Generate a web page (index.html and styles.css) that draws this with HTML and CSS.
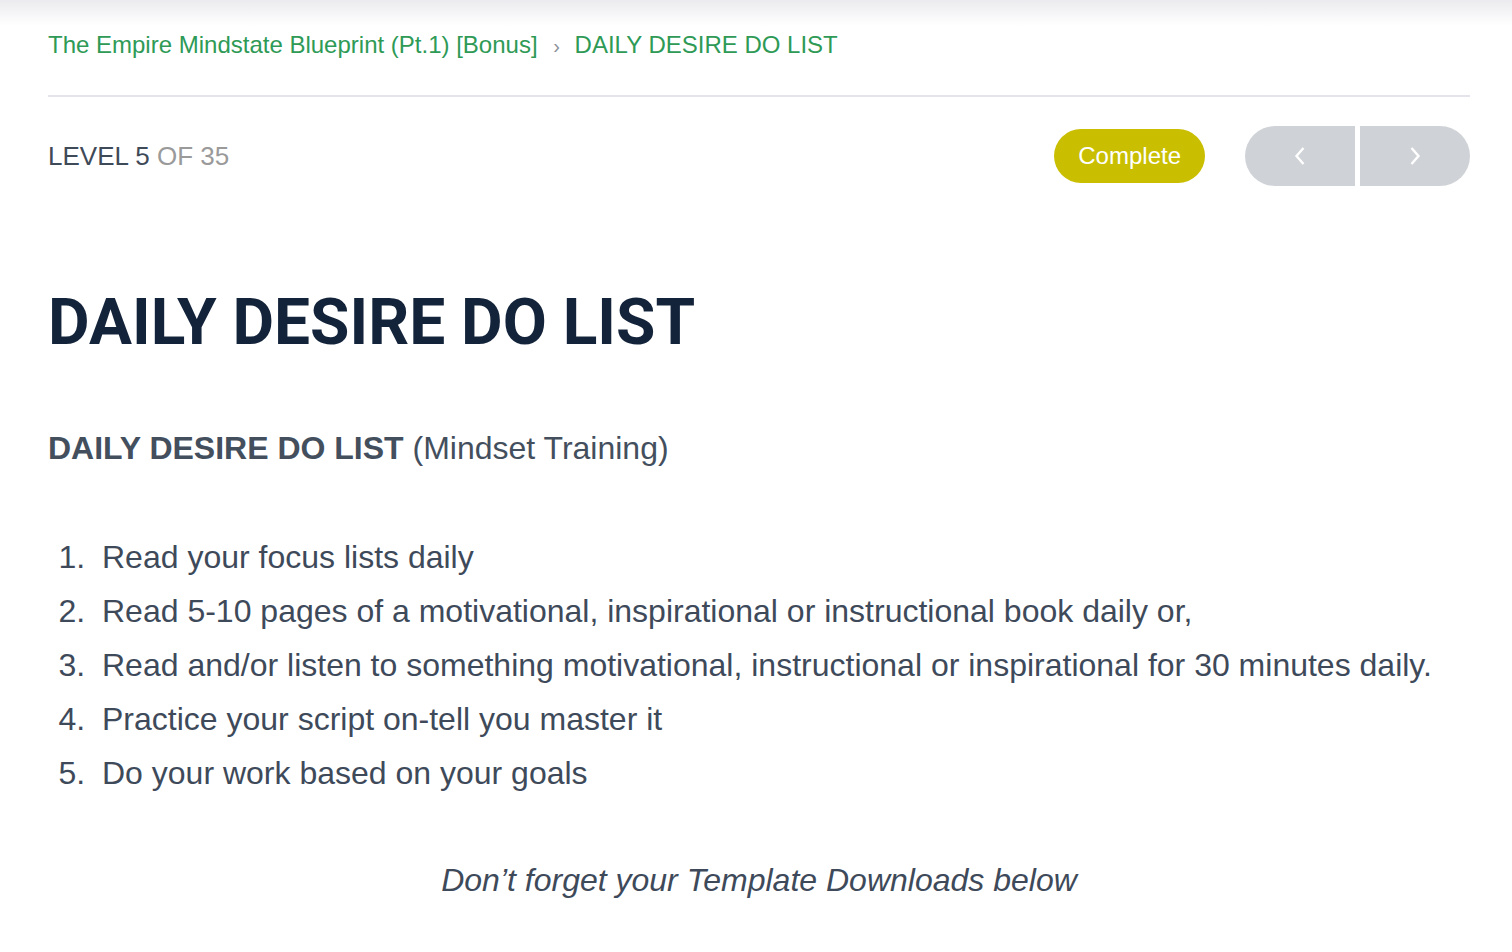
FILE: index.html
```html
<!DOCTYPE html>
<html lang="en">
<head>
    <meta charset="UTF-8">
    <meta name="viewport" content="width=device-width, initial-scale=1.0">
    <title>DAILY DESIRE DO LIST</title>
    <link rel="stylesheet" href="styles.css">
</head>
<body>
    <div class="topshade"></div>
    <div class="page">
        <div class="crumbs">
            <a href="#">The Empire Mindstate Blueprint (Pt.1) [Bonus]</a>
            <span class="sep">&rsaquo;</span>
            <a href="#">DAILY DESIRE DO LIST</a>
        </div>

        <div class="levelbar">
            <div class="level">LEVEL <span class="num">5</span> <span class="of">OF 35</span></div>
            <div class="actions">
                <button class="complete">Complete</button>
                <div class="nav">
                    <button class="prev">
                        <svg width="12" height="20" viewBox="0 0 12 20"><path d="M9.5 2 L2.5 10 L9.5 18" fill="none" stroke="#fff" stroke-width="2.4"/></svg>
                    </button>
                    <button class="next">
                        <svg width="12" height="20" viewBox="0 0 12 20"><path d="M2.5 2 L9.5 10 L2.5 18" fill="none" stroke="#fff" stroke-width="2.4"/></svg>
                    </button>
                </div>
            </div>
        </div>

        <h1>DAILY DESIRE DO LIST</h1>

        <p class="lead"><strong>DAILY DESIRE DO LIST</strong> (Mindset Training)</p>

        <ol class="todo">
            <li>Read your focus lists daily</li>
            <li>Read 5-10 pages of a motivational, inspirational or instructional book daily or,</li>
            <li>Read and/or listen to something motivational, instructional or inspirational for 30 minutes daily.</li>
            <li>Practice your script on-tell you master it</li>
            <li>Do your work based on your goals</li>
        </ol>

        <p class="note">Don’t forget your Template Downloads below</p>
    </div>
</body>
</html>
```

FILE: styles.css
```css
body {
    margin: 0;
    background: #fff;
    font-family: "Liberation Sans", Arial, sans-serif;
    color: #3e4a5a;
}

.topshade {
    height: 26px;
    margin-bottom: -26px;
    background: linear-gradient(#ebebef, rgba(255, 255, 255, 0));
}

.page {
    padding: 0 42px 0 48px;
}

.crumbs {
    padding-top: 31px;
    height: 97px;
    box-sizing: border-box;
    border-bottom: 2px solid #e4e4ea;
    font-size: 24px;
    line-height: 28px;
    color: #2e9a56;
}

.crumbs a {
    color: #2e9a56;
    text-decoration: none;
}

.crumbs .sep {
    color: #8a8f98;
    font-size: 20px;
    margin: 0 8px 0 9px;
}

.levelbar {
    display: flex;
    justify-content: space-between;
    align-items: center;
    padding-top: 29px;
}

.level {
    font-size: 26px;
    color: #3f4a58;
}

.level .of {
    color: #9a9a9a;
}

.actions {
    display: flex;
    align-items: center;
    gap: 40px;
}

button {
    border: none;
    cursor: pointer;
    font-family: inherit;
}

.complete {
    background-color: #c9bf00;
    color: #fff;
    font-size: 24px;
    height: 54px;
    padding: 0 24px;
    border-radius: 27px;
}

.nav {
    display: flex;
    gap: 5px;
}

.nav button {
    width: 110px;
    height: 60px;
    background-color: #cfd2d6;
    display: flex;
    align-items: center;
    justify-content: center;
}

.nav .prev {
    border-radius: 30px 0 0 30px;
}

.nav .next {
    border-radius: 0 30px 30px 0;
}

h1 {
    font-family: Roboto, sans-serif;
    font-weight: 700;
    font-size: 64px;
    color: #13233a;
    margin: 97px 0 0;
    line-height: 80px;
}

.lead {
    font-size: 32px;
    color: #444f5e;
    margin: 67px 0 0;
}

.todo {
    margin: 63px 0 0;
    padding-left: 46px;
    font-size: 32px;
    line-height: 54px;
}

.todo li {
    padding-left: 8px;
}

.note {
    text-align: center;
    font-style: italic;
    font-size: 32px;
    margin: 62px 0 0;
}
```
